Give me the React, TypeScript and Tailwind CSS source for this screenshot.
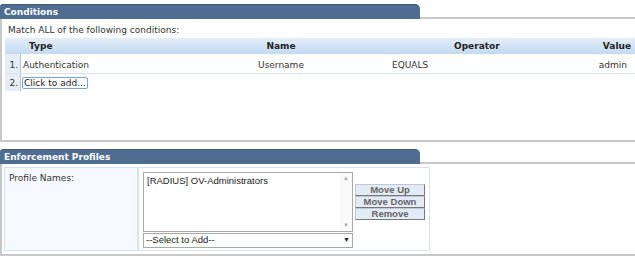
import React from 'react';

const verdana = { fontFamily: '"DejaVu Sans", Verdana, sans-serif' };

function SectionTab({ title }: { title: string }) {
  return (
    <div className="flex items-end">
      <div className="w-[420px] h-[15px] bg-[#4f6d90] border-t border-[#3f5a7a] rounded-tl-[3px] rounded-tr-[5px] text-white font-bold text-[9px] leading-[14px] pl-[4px]">
        {title}
      </div>
      <div className="flex-1 border-b-2 border-[#c8c8c8]" />
    </div>
  );
}

export default function App() {
  return (
    <div className="w-[635px] h-[258px] bg-white text-[#333] text-[9px] overflow-hidden" style={verdana}>
      {/* Conditions */}
      <div className="pt-[4px]">
        <SectionTab title="Conditions" />
        <div className="h-[123px] border-l-2 border-b-2 border-[#c8c8c8] pl-[3px]">
          <div className="pl-[3px] pt-[5px] h-[19px] leading-[12px]">Match ALL of the following conditions:</div>
          <div className="grid grid-cols-[16px_220px_80px_240px_1fr]">
            {/* header */}
            <div className="h-[16px] bg-gradient-to-b from-[#e3eefa] to-[#c4daf1]" />
            <div className="h-[16px] bg-gradient-to-b from-[#e3eefa] to-[#c4daf1] font-bold leading-[16px] pl-[8px] text-[#222]">Type</div>
            <div className="h-[16px] bg-gradient-to-b from-[#e3eefa] to-[#c4daf1] font-bold leading-[16px] text-center text-[#222]">Name</div>
            <div className="h-[16px] bg-gradient-to-b from-[#e3eefa] to-[#c4daf1] font-bold leading-[16px] pl-[133px] text-[#222]">Operator</div>
            <div className="h-[16px] bg-gradient-to-b from-[#e3eefa] to-[#c4daf1] font-bold leading-[16px] text-right pr-[4px] text-[#222]">Value</div>
            {/* row 1 */}
            <div className="h-[20px] bg-[#e6edf7] border-r border-[#b8c4d4] border-b border-b-[#dbe6f4] text-right pr-[2px] leading-[22px]">1.</div>
            <div className="h-[20px] border-b border-[#dbe6f4] pl-[2px] leading-[22px]">Authentication</div>
            <div className="h-[20px] border-b border-[#dbe6f4] text-center leading-[22px]">Username</div>
            <div className="h-[20px] border-b border-[#dbe6f4] pl-[71px] leading-[22px]">EQUALS</div>
            <div className="h-[20px] border-b border-[#dbe6f4] text-right pr-[8px] leading-[22px]">admin</div>
            {/* row 2 */}
            <div className="h-[17px] bg-[#e6edf7] border-r border-[#b8c4d4] text-right pr-[2px] leading-[19px]">2.</div>
            <div className="h-[17px] pl-[1px] pt-[3px]">
              <span className="inline-block border border-[#7aa2d6] rounded-[2px] px-[1px] h-[12px] leading-[10px] text-[#222]">Click to add...</span>
            </div>
            <div className="h-[17px]" />
            <div className="h-[17px]" />
            <div className="h-[17px]" />
          </div>
        </div>
      </div>

      {/* Enforcement Profiles */}
      <div className="pt-[7px]">
        <SectionTab title="Enforcement Profiles" />
        <div className="h-[92px] border-l-2 border-b-2 border-[#c8c8c8] pl-[2px] pt-[3px]">
          <div className="flex h-[84px] w-[426px]">
            <div className="w-[134px] bg-[#f6f9ff] border border-[#d6e2f3] pl-[4px] pt-[4px]">Profile Names:</div>
            <div className="flex-1 border border-[#d6e2f3] flex pl-[4px] pt-[4px]" style={{ fontFamily: '"Liberation Sans", Arial, sans-serif' }}>
              <div className="w-[210px] flex flex-col">
                <div className="h-[60px] border border-[#a9a9a9] flex">
                  <div className="flex-1 pl-[3px] pt-[1px] text-[9.5px] text-[#222]">[RADIUS] OV-Administrators</div>
                  <div className="w-[12px] flex flex-col justify-between items-center text-[6px] text-[#aaa] py-[1px] bg-[#fafafa]">
                    <span>▲</span>
                    <span>▼</span>
                  </div>
                </div>
                <div className="mt-[1px] h-[15px] border border-[#a9a9a9] flex items-center justify-between px-[2px] text-[9.5px] text-[#222]">
                  <span>--Select to Add--</span>
                  <span className="text-[7px]">▼</span>
                </div>
              </div>
              <div className="w-[70px] ml-[2px] pt-[12px] flex flex-col">
                {['Move Up', 'Move Down', 'Remove'].map((b) => (
                  <button
                    key={b}
                    className="h-[12px] w-[70px] bg-[#e3ebf7] border border-[#c0c8d4] border-r-[#777] border-b-[#777] text-[9.5px] font-bold text-[#666] leading-[10px]"
                  >
                    {b}
                  </button>
                ))}
              </div>
            </div>
          </div>
        </div>
      </div>
    </div>
  );
}
